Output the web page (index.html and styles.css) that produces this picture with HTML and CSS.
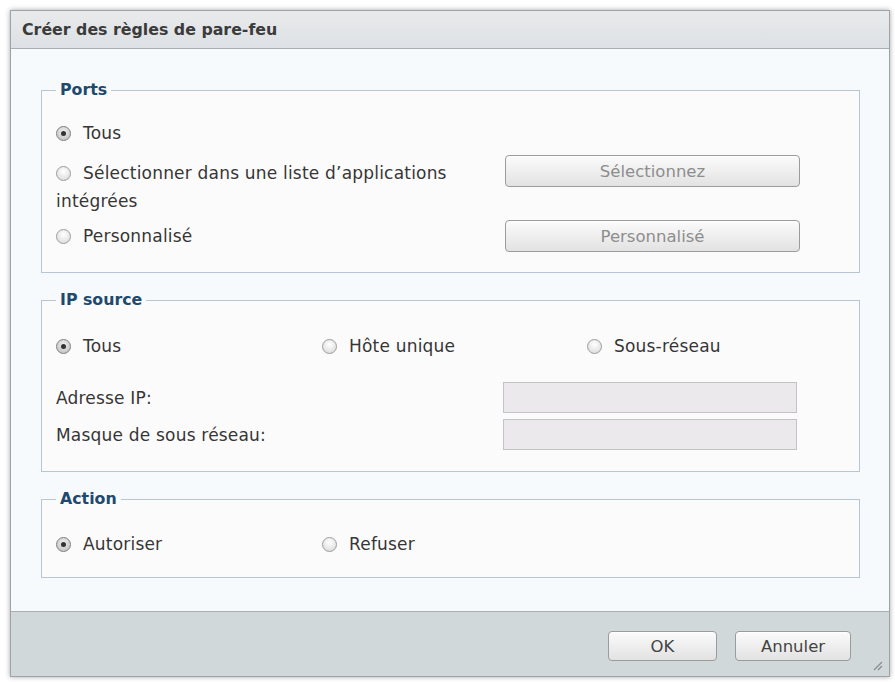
FILE: index.html
```html
<!DOCTYPE html>
<html lang="fr">
<head>
<meta charset="utf-8">
<title>Créer des règles de pare-feu</title>
<link rel="stylesheet" href="styles.css">
</head>
<body>
<div class="dialog">
  <div class="titlebar">Créer des règles de pare-feu</div>
  <div class="content">
    <fieldset class="group ports">
      <legend>Ports</legend>
      <div class="row row-first">
        <label class="opt"><span class="radio checked"></span>Tous</label>
      </div>
      <div class="row row-two">
        <label class="opt wrap"><span class="radio"></span>Sélectionner dans une liste d’applications intégrées</label>
        <button class="btn wide disabled">Sélectionnez</button>
      </div>
      <div class="row row-three">
        <label class="opt"><span class="radio"></span>Personnalisé</label>
        <button class="btn wide disabled">Personnalisé</button>
      </div>
    </fieldset>

    <fieldset class="group ipsource">
      <legend>IP source</legend>
      <div class="radios">
        <label class="opt"><span class="radio checked"></span>Tous</label>
        <label class="opt"><span class="radio"></span>Hôte unique</label>
        <label class="opt"><span class="radio"></span>Sous-réseau</label>
      </div>
      <div class="field first-field">
        <span class="flabel">Adresse IP:</span>
        <span class="input"></span>
      </div>
      <div class="field">
        <span class="flabel">Masque de sous réseau:</span>
        <span class="input"></span>
      </div>
    </fieldset>

    <fieldset class="group action">
      <legend>Action</legend>
      <div class="radios">
        <label class="opt"><span class="radio checked"></span>Autoriser</label>
        <label class="opt"><span class="radio"></span>Refuser</label>
      </div>
    </fieldset>
  </div>
  <div class="footer">
    <button class="btn ok">OK</button>
    <button class="btn cancel">Annuler</button>
    <svg class="grip" width="12" height="12" viewBox="0 0 12 12"><path d="M11 3 L3 11 M11 7 L7 11" stroke="#8a8f93" stroke-width="1.3" fill="none"/></svg>
  </div>
</div>
</body>
</html>
```
FILE: styles.css
```css
html, body {
  margin: 0;
  padding: 0;
  background: #ffffff;
}
body {
  padding: 10px 5px 5px 10px;
  font-family: "DejaVu Sans", Verdana, sans-serif;
  color: #3a3a3a;
}
.dialog {
  width: 878px;
  height: 665px;
  border: 1px solid #9ea3a7;
  box-shadow: 0 0 5px rgba(0, 0, 0, 0.35);
  display: flex;
  flex-direction: column;
  background: #f6fafc;
}
.titlebar {
  height: 37px;
  line-height: 37px;
  padding-left: 11px;
  font-size: 15.8px;
  font-weight: bold;
  color: #3b3b3b;
  background: linear-gradient(#e9eaeb, #dde1e5);
  border-bottom: 1px solid #a9aeb2;
}
.content {
  flex: 1;
  padding: 33px 29px 0 30px;
  background: #f7fafc;
}
.group {
  margin: 0 0 19px 0;
  padding: 0 14px 20px 14px;
  border: 1px solid #b7c6d2;
  background: #fcfbfb;
  min-width: 0;
}
.group legend {
  padding: 0 4px;
  margin: 0;
  font-size: 15.8px;
  font-weight: bold;
  line-height: 16px;
  color: #21496e;
}
.opt {
  display: inline-flex;
  align-items: center;
  font-size: 17px;
  letter-spacing: 0.2px;
  line-height: 28px;
  color: #363636;
}
.radio {
  box-sizing: border-box;
  width: 15px;
  height: 15px;
  border-radius: 50%;
  border: 1px solid #9c9c9c;
  background: radial-gradient(circle at 50% 35%, #ffffff, #d6d6d6);
  margin-right: 12px;
  flex: none;
  position: relative;
}
.radio.checked {
  background: radial-gradient(circle at 50% 35%, #eeeeee, #bbbbbb);
  border-color: #808080;
}
.radio.checked::after {
  content: "";
  position: absolute;
  left: 4px;
  top: 4px;
  width: 5px;
  height: 5px;
  border-radius: 50%;
  background: #333333;
}
.ports .row {
  display: flex;
  align-items: flex-start;
}
.row-first {
  padding-top: 21px;
}
.row-two {
  margin-top: 12px;
}
.ports .row-three {
  margin-top: 5px;
  align-items: center;
}
.ports .opt {
  width: 420px;
  margin-right: 29px;
}
.ports .opt.wrap {
  display: block;
}
.opt.wrap .radio {
  display: inline-block;
  vertical-align: -2px;
}
.row-two .btn {
  margin-top: -4px;
}
.btn {
  font-family: "DejaVu Sans", Verdana, sans-serif;
  font-size: 16.5px;
  border: 1px solid #9b9b9b;
  border-radius: 4px;
  background: linear-gradient(#fbfbfb, #e2e2e2);
  color: #444;
  padding: 0;
  box-shadow: inset 0 1px 0 #ffffff;
}
.btn.wide {
  width: 295px;
  height: 32px;
}
.btn.disabled {
  color: #8d8d8d;
}
.radios {
  display: grid;
  grid-template-columns: 266px 265px 1fr;
}
.ipsource .radios {
  margin-top: 24px;
}
.action .radios {
  margin-top: 23px;
}
.action {
  padding-bottom: 19px;
}
.ipsource {
  padding-bottom: 21px;
}
.field {
  display: flex;
  align-items: center;
  margin-top: 6px;
}
.field.first-field {
  margin-top: 22px;
}
.flabel {
  width: 447px;
  font-size: 17px;
  letter-spacing: 0.2px;
  color: #363636;
}
.input {
  width: 294px;
  height: 31px;
  box-sizing: border-box;
  border: 1px solid #c3c3c5;
  background: #ece9ec;
}
.footer {
  height: 64px;
  border-top: 1px solid #a9aeb2;
  background: #d1d8da;
  display: flex;
  justify-content: flex-end;
  align-items: center;
  padding-right: 38px;
  gap: 18px;
  position: relative;
}
.btn.ok {
  width: 109px;
  height: 30px;
  margin-top: 4px;
}
.btn.cancel {
  width: 116px;
  height: 30px;
  margin-top: 4px;
}
.grip {
  position: absolute;
  right: 6px;
  bottom: 5px;
}
```
